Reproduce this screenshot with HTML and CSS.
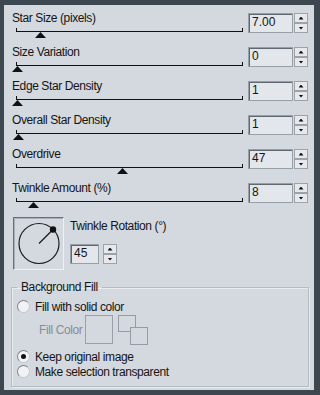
FILE: index.html
```html
<!DOCTYPE html>
<html lang="en">
<head>
    <title>Star Effects</title>
    <meta charset="utf-8"/>
    <link rel="stylesheet" href="styles.css">
</head>
<body>
    <div class="dialog">
        <div class="row">
            <div class="slider">
                <div class="label">Star Size (pixels)</div>
                <div class="track"></div>
                <div class="thumb" style="margin-left: 23px;"></div>
            </div>
            <div class="spin">
                <div class="field">7.00</div>
                <div class="arrows"><span class="up"></span><span class="down"></span></div>
            </div>
        </div>
        <div class="row">
            <div class="slider">
                <div class="label">Size Variation</div>
                <div class="track"></div>
                <div class="thumb" style="margin-left: 0px;"></div>
            </div>
            <div class="spin">
                <div class="field">0</div>
                <div class="arrows"><span class="up"></span><span class="down"></span></div>
            </div>
        </div>
        <div class="row">
            <div class="slider">
                <div class="label">Edge Star Density</div>
                <div class="track"></div>
                <div class="thumb" style="margin-left: 0px;"></div>
            </div>
            <div class="spin">
                <div class="field">1</div>
                <div class="arrows"><span class="up"></span><span class="down"></span></div>
            </div>
        </div>
        <div class="row">
            <div class="slider">
                <div class="label">Overall Star Density</div>
                <div class="track"></div>
                <div class="thumb" style="margin-left: 1px;"></div>
            </div>
            <div class="spin">
                <div class="field">1</div>
                <div class="arrows"><span class="up"></span><span class="down"></span></div>
            </div>
        </div>
        <div class="row">
            <div class="slider">
                <div class="label">Overdrive</div>
                <div class="track"></div>
                <div class="thumb" style="margin-left: 105px;"></div>
            </div>
            <div class="spin">
                <div class="field">47</div>
                <div class="arrows"><span class="up"></span><span class="down"></span></div>
            </div>
        </div>
        <div class="row">
            <div class="slider">
                <div class="label">Twinkle Amount (%)</div>
                <div class="track"></div>
                <div class="thumb" style="margin-left: 16px;"></div>
            </div>
            <div class="spin">
                <div class="field">8</div>
                <div class="arrows"><span class="up"></span><span class="down"></span></div>
            </div>
        </div>

        <div class="rotation">
            <div class="dial">
                <svg width="49" height="51" viewBox="0 0 49 51">
                    <circle cx="25" cy="25.5" r="20" fill="none" stroke="#1c1c1c" stroke-width="1.2"/>
                    <line x1="25" y1="25.5" x2="39" y2="11.5" stroke="#1c1c1c" stroke-width="1.2"/>
                    <circle cx="39" cy="11.5" r="3.2" fill="#111"/>
                </svg>
            </div>
            <div class="rot-side">
                <div class="label">Twinkle Rotation (°)</div>
                <div class="spin spin-small">
                    <div class="field">45</div>
                    <div class="arrows"><span class="up"></span><span class="down"></span></div>
                </div>
            </div>
        </div>

        <fieldset class="group">
            <legend>Background Fill</legend>
            <div class="radio"><span class="dot"></span>Fill with solid color</div>
            <div class="fill-row">
                <span class="fill-label">Fill Color</span>
                <span class="swatch"></span>
                <svg class="swap" width="30" height="30" viewBox="0 0 30 30">
                    <rect x="0.5" y="0.5" width="17" height="16" fill="none" stroke="#959ba3"/>
                    <rect x="12.5" y="12.5" width="17" height="17" fill="#d4d8df" stroke="#959ba3"/>
                </svg>
            </div>
            <div class="radio gap"><span class="dot checked"></span>Keep original image</div>
            <div class="radio"><span class="dot"></span>Make selection transparent</div>
        </fieldset>
    </div>
</body>
</html>
```

FILE: styles.css
```css
body {
    margin: 0;
    background-color: #3c4750;
    font-family: "Liberation Sans", Arial, sans-serif;
    font-size: 12px;
    color: #151515;
}
.dialog {
    margin: 5px 0 0 4px;
    width: 310px;
    height: 385px;
    box-sizing: border-box;
    padding: 6px 6px 0 8px;
    background-color: #d4d8df;
}
.label {
    line-height: 14px;
    letter-spacing: -0.4px;
    white-space: nowrap;
}
.row {
    display: flex;
    height: 34px;
}
.slider {
    width: 236px;
}
.track {
    margin: 3px 0 0 4px;
    width: 225px;
    height: 3px;
    border: 1px solid #111;
    border-top: 0;
}
.thumb {
    width: 11px;
    height: 6px;
    background-color: #111;
    clip-path: polygon(50% 0, 100% 100%, 0 100%);
}
.spin {
    display: flex;
    gap: 1px;
    margin-top: 2px;
}
.field {
    width: 45px;
    height: 20px;
    box-sizing: border-box;
    padding: 1px 0 0 3px;
    line-height: 14px;
    border: 1px solid #979fa7;
    box-shadow: inset 1px 1px 0 #5f6870;
    background-color: #e3e6ea;
}
.arrows {
    display: flex;
    flex-direction: column;
    width: 14px;
}
.arrows span {
    display: flex;
    align-items: center;
    justify-content: center;
    height: 10px;
    box-sizing: border-box;
    border: 1px solid #9ba2aa;
    background-color: #e6e8ec;
}
.arrows span::after {
    content: "";
    width: 5px;
    height: 3px;
    background-color: #111;
}
.up::after {
    clip-path: polygon(50% 0, 100% 100%, 0 100%);
}
.down::after {
    clip-path: polygon(0 0, 100% 0, 50% 100%);
}
.rotation {
    display: flex;
    margin: 2px 0 0 1px;
}
.dial {
    width: 51px;
    height: 53px;
    box-sizing: border-box;
    border: 1px solid;
    border-color: #66707a #eef0f3 #eef0f3 #66707a;
    box-shadow: inset 1px 1px 0 #a9b0b7;
}
.dial svg {
    display: block;
}
.rot-side {
    margin: 2px 0 0 6px;
}
.spin-small {
    gap: 4px;
    margin-top: 11px;
}
.spin-small .field {
    width: 29px;
}
.group {
    margin: 10px 0 0 -1px;
    width: 298px;
    height: 107px;
    box-sizing: border-box;
    padding: 5px 0 0 5px;
    border: 1px solid #b5bbc3;
    box-shadow: inset 1px 1px 0 #e9ecef, 1px 1px 0 #e9ecef;
}
.group legend {
    padding: 0 4px;
    line-height: 14px;
    letter-spacing: -0.4px;
}
.radio {
    display: flex;
    align-items: center;
    height: 15px;
    letter-spacing: -0.4px;
    white-space: nowrap;
}
.radio.gap {
    margin-top: 5px;
}
.dot {
    display: flex;
    align-items: center;
    justify-content: center;
    width: 13px;
    height: 13px;
    box-sizing: border-box;
    margin-right: 5px;
    border: 1px solid;
    border-color: #7c838b #c3c8ce #c3c8ce #7c838b;
    border-radius: 50%;
    background-color: #f1f2f5;
}
.dot.checked::after {
    content: "";
    width: 5px;
    height: 5px;
    border-radius: 50%;
    background-color: #111;
}
.fill-row {
    display: flex;
    align-items: center;
    margin-top: 1px;
    height: 29px;
}
.fill-label {
    width: 46px;
    margin-left: 22px;
    color: #878d95;
    letter-spacing: -0.4px;
    white-space: nowrap;
}
.swatch {
    width: 28px;
    height: 29px;
    box-sizing: border-box;
    border: 1px solid #9aa0a8;
}
.swap {
    margin-left: 5px;
}
```
